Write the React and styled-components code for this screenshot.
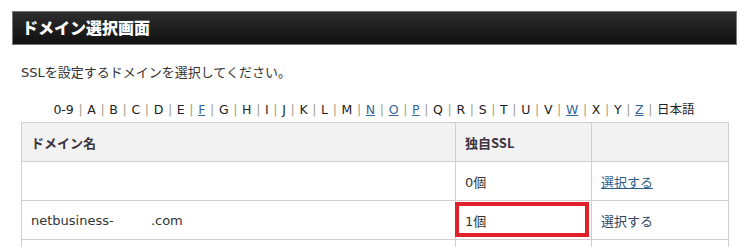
import React from "react";
import styled, { createGlobalStyle } from "styled-components";

const GlobalStyle = createGlobalStyle`
  body {
    margin: 0;
    background: #ffffff;
    font-family: "DejaVu Sans", "Noto Sans CJK JP", sans-serif;
    color: #333333;
    overflow: hidden;
  }
`;

const Page = styled.div`
  padding: 11px 9px 0 12px;
  width: 746px;
  box-sizing: border-box;
`;

const TitleBar = styled.h2`
  margin: 0;
  height: 34px;
  box-sizing: border-box;
  border: 1px solid #7a7a7a;
  background: linear-gradient(#2d2d2d, #111111);
  color: #ffffff;
  font-size: 16px;
  font-weight: 900;
  font-family: "Noto Sans CJK JP", sans-serif;
  line-height: 31px;
  padding-left: 9px;
`;

const Body = styled.div`
  padding-left: 9px;
  padding-right: 10px;
`;

const Lead = styled.p`
  margin: 18px 0 0;
  font-size: 13px;
  line-height: 20px;
`;

const AlphaNav = styled.div`
  margin-top: 17px;
  text-align: center;
  font-size: 12.5px;
  line-height: 20px;
  white-space: nowrap;
`;

const Letter = styled.span`
  color: ${(p) => (p.$link ? "#336699" : "#222222")};
  text-decoration: ${(p) => (p.$link ? "underline" : "none")};
`;

const Sep = styled.span`
  color: #a0a08a;
  margin: 0 4.65px;
`;

const Table = styled.table`
  margin-top: 2px;
  width: 707px;
  border-collapse: collapse;
  table-layout: fixed;
  font-size: 13px;
`;

const Th = styled.th`
  height: 39px;
  box-sizing: border-box;
  border: 1px solid #cfcfcf;
  background: #f2f2f2;
  text-align: left;
  padding: 0 9px;
  font-weight: bold;
  font-family: "Noto Sans CJK JP", sans-serif;
  color: #3a3340;
  width: ${(p) => p.$w}px;
`;

const Td = styled.td`
  height: 39px;
  box-sizing: border-box;
  border: 1px solid #cfcfcf;
  padding: 0 9px;
  position: relative;
  color: #333333;
  white-space: pre;
`;

const SelectLink = styled.a`
  color: ${(p) => (p.$active ? "#2a5d8c" : "#2f4560")};
  text-decoration: ${(p) => (p.$active ? "underline" : "none")};
  cursor: pointer;
`;

const Highlight = styled.span`
  position: absolute;
  top: 1px;
  left: -1px;
  width: 134px;
  height: 35px;
  box-sizing: border-box;
  border: 4px solid #e2202b;
  pointer-events: none;
`;

const letters = [
  "0-9", "A", "B", "C", "D", "E", "F", "G", "H", "I", "J", "K", "L", "M",
  "N", "O", "P", "Q", "R", "S", "T", "U", "V", "W", "X", "Y", "Z", "日本語",
];
const linked = ["F", "N", "O", "P", "W", "Z"];

const rows = [
  { domain: "", count: "0個", active: true },
  { domain: "netbusiness-         .com", count: "1個", active: false, mark: true },
];

export default function App() {
  return (
    <>
      <GlobalStyle />
      <Page>
        <TitleBar>ドメイン選択画面</TitleBar>
        <Body>
          <Lead>SSLを設定するドメインを選択してください。</Lead>
          <AlphaNav>
            {letters.map((l, i) => (
              <React.Fragment key={l}>
                {i > 0 && <Sep>|</Sep>}
                <Letter $link={linked.includes(l)}>{l}</Letter>
              </React.Fragment>
            ))}
          </AlphaNav>
          <Table>
            <thead>
              <tr>
                <Th $w={434}>ドメイン名</Th>
                <Th $w={136}>独自SSL</Th>
                <Th $w={137}></Th>
              </tr>
            </thead>
            <tbody>
              {rows.map((r, i) => (
                <tr key={i}>
                  <Td>{r.domain}</Td>
                  <Td>
                    {r.count}
                    {r.mark && <Highlight />}
                  </Td>
                  <Td>
                    <SelectLink $active={r.active}>選択する</SelectLink>
                  </Td>
                </tr>
              ))}
              <tr>
                <Td></Td>
                <Td></Td>
                <Td></Td>
              </tr>
            </tbody>
          </Table>
        </Body>
      </Page>
    </>
  );
}
